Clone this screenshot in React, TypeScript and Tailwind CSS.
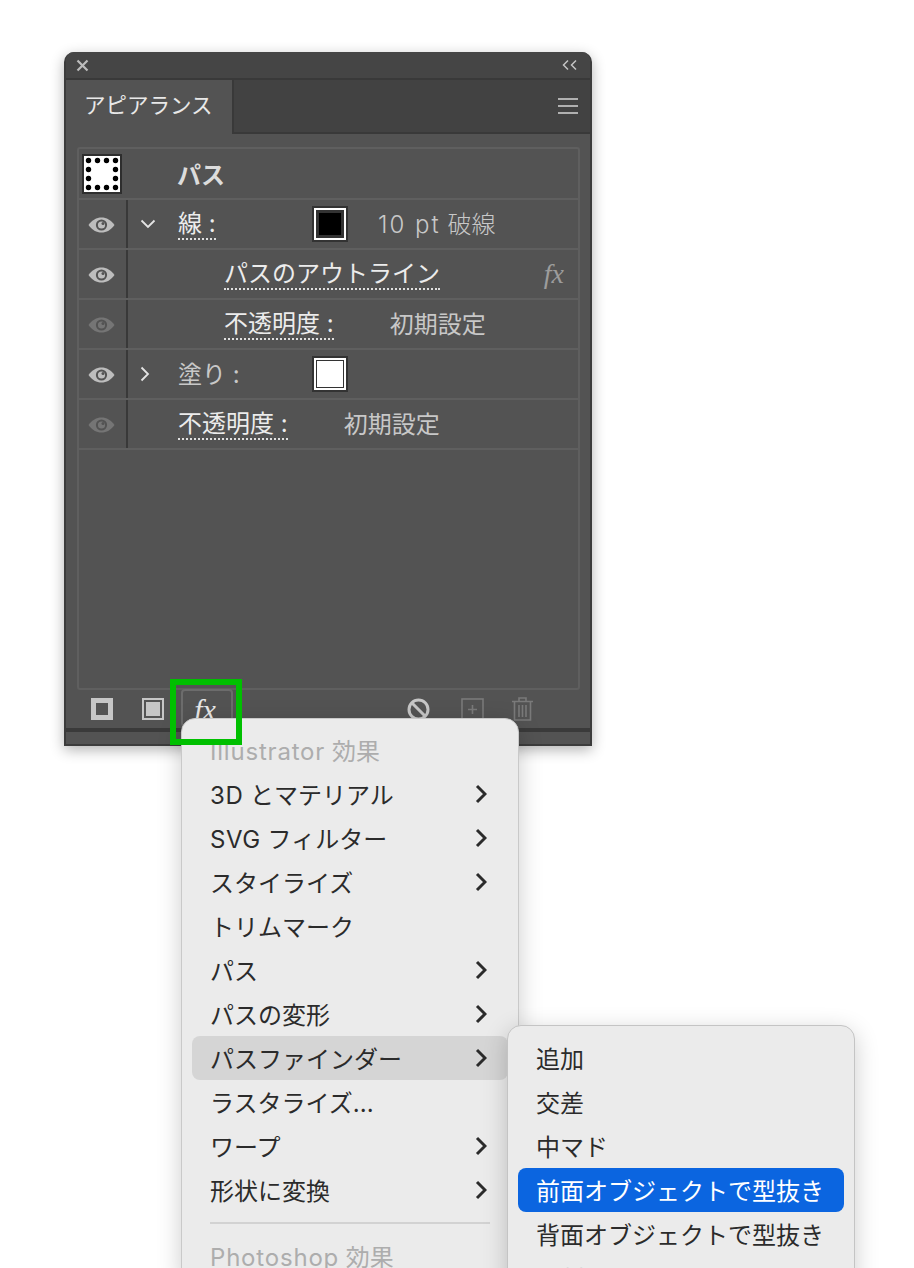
import React from "react";

const font = "font-['Inter','Noto_Sans_CJK_JP',sans-serif]";

function Eye({ dim = false }: { dim?: boolean }) {
	const c = dim ? "#757575" : "#bdbdbd";
	return (
		<svg width="27" height="16" viewBox="0 0 27 16">
			<path d="M0.5 8C4 3 8.5 0.5 13.5 0.5S23 3 26.5 8C23 13 18.5 15.5 13.5 15.5S4 13 0.5 8Z" fill={c} />
			<circle cx="13.5" cy="8" r="5.6" fill="#535353" />
			<circle cx="13.5" cy="8" r="3.6" fill={c} />
			<circle cx="15" cy="6.4" r="1.5" fill="#535353" />
		</svg>
	);
}

function Swatch({ black = false }: { black?: boolean }) {
	return (
		<div className="w-[36px] h-[36px] bg-[#333333] p-[2px] shrink-0">
			<div className={`w-full h-full border-2 border-white bg-[#333333] ${black ? "p-[3px]" : "p-[1px]"}`}>
				<div className={black ? "w-full h-full bg-black" : "w-full h-full bg-white"} />
			</div>
		</div>
	);
}

function Row({ eye = "on", children }: { eye?: "on" | "dim"; children?: React.ReactNode }) {
	return (
		<div className="flex h-[50px] border-b-2 border-[#5f5f5f] items-center">
			<div className="w-[47px] flex justify-center pr-[2px] mt-[2px]">
				<Eye dim={eye === "dim"} />
			</div>
			<div className="w-[2px] h-[48px] bg-[#393939]" />
			{children}
		</div>
	);
}

function Label({ children }: { children: React.ReactNode }) {
	return (
		<span className="pt-[2px] text-[24px] leading-[28px] text-[#ececec] border-b-2 border-dotted border-[#e0e0e0] whitespace-nowrap">
			{children}
		</span>
	);
}

function Chevron({ color = "#2b2b2b", w = 3 }: { color?: string; w?: number }) {
	return (
		<svg width="12" height="20" viewBox="0 0 12 20" fill="none">
			<path d="M2 2L10 10L2 18" stroke={color} strokeWidth={w} />
		</svg>
	);
}

function Item({ label, arrow = false, active = false }: { label: React.ReactNode; arrow?: boolean; active?: boolean }) {
	return (
		<div className={`flex h-[44px] items-center justify-between pl-[18px] pr-[21px] rounded-[8px] text-[24px] text-[#2b2b2b] whitespace-nowrap ${active ? "bg-[#d5d5d5]" : ""}`}>
			<span className="mt-[3px]">{label}</span>
			{arrow && <Chevron />}
		</div>
	);
}

function SubItem({ label, active = false, dim = false }: { label: string; active?: boolean; dim?: boolean }) {
	const tone = active ? "bg-[#0b65e0] text-white" : dim ? "text-[#adadad]" : "text-[#2b2b2b]";
	return <div className={`flex h-[44px] items-center pl-[18px] pt-[3px] rounded-[8px] text-[24px] whitespace-nowrap ${tone}`}>{label}</div>;
}

export default function App() {
	return (
		<div lang="ja" className={`relative w-[914px] h-[1268px] overflow-hidden bg-white pt-[52px] pl-[64px] ${font}`}>
			{/* panel */}
			<div className="w-[528px] h-[694px] flex flex-col bg-[#535353] border-2 border-t-0 border-[#3c3c3c] rounded-t-[10px] shadow-[0_4px_14px_rgba(0,0,0,0.3)] overflow-hidden">
				<div className="h-[28px] shrink-0 flex items-center justify-between pl-[10px] pr-[12px] bg-[#454545] border-b-2 border-[#393939]">
					<svg width="13" height="13" viewBox="0 0 13 13" fill="none">
						<path d="M1.5 1.5L11.5 11.5M11.5 1.5L1.5 11.5" stroke="#bcbcbc" strokeWidth="2.2" />
					</svg>
					<svg width="16" height="12" viewBox="0 0 16 12" fill="none">
						<path d="M6 1.5L1.5 6L6 10.5M14 1.5L9.5 6L14 10.5" stroke="#c4c4c4" strokeWidth="1.5" />
					</svg>
				</div>
				<div className="h-[54px] shrink-0 flex">
					<div className="w-[168px] pl-[18px] pt-[10px] text-[21.5px] leading-[30px] text-[#e8e8e8] whitespace-nowrap bg-[#535353] border-r-2 border-[#393939]">
						アピアランス
					</div>
					<div className="flex-1 bg-[#424242] border-b-2 border-[#393939] flex items-center justify-end pr-[12px]">
						<div className="flex flex-col gap-[5px]">
							<div className="w-[20px] h-[2px] bg-[#b0b0b0]" />
							<div className="w-[20px] h-[2px] bg-[#b0b0b0]" />
							<div className="w-[20px] h-[2px] bg-[#b0b0b0]" />
						</div>
					</div>
				</div>
				{/* list */}
				<div className="h-[543px] mt-[13px] ml-[11px] mr-[10px] shrink-0 border-2 border-[#5f5f5f] rounded-[3px]">
					<div className="flex h-[51px] border-b-2 border-[#5f5f5f] items-center">
						<svg className="ml-[3px]" width="40" height="40" viewBox="0 0 40 40">
							<rect width="40" height="40" fill="#2e2e2e" />
							<rect x="2" y="2" width="36" height="36" fill="#ffffff" />
							{[6.5, 15.5, 24.5, 33.5].map((y) =>
								[6.5, 15.5, 24.5, 33.5].map((x) =>
									x === 6.5 || x === 33.5 || y === 6.5 || y === 33.5 ? <circle key={`${x}-${y}`} cx={x} cy={y} r="2.7" fill="#000" /> : null,
								),
							)}
						</svg>
						<span className="ml-[55px] mt-[4px] text-[24px] font-bold text-[#dcdcdc]">パス</span>
					</div>
					<Row>
						<div className="w-[50px] pl-[12px]">
							<svg width="16" height="10" viewBox="0 0 16 10" fill="none">
								<path d="M1.5 1.5L8 8L14.5 1.5" stroke="#e4e4e4" strokeWidth="1.8" />
							</svg>
						</div>
						<div className="w-[134px]">
							<Label>線 :</Label>
						</div>
						<Swatch black />
						<span className="ml-[30px] mt-[2px] text-[24px] font-light text-[#c8c8c8] whitespace-nowrap">
							<span className="tracking-[2px]">10 pt</span> 破線
						</span>
					</Row>
					<Row>
						<div className="w-[96px]" />
						<Label>パスのアウトライン</Label>
						<span className="ml-auto mr-[14px] font-['Liberation_Serif',serif] italic text-[28px] text-[#9c9c9c]">fx</span>
					</Row>
					<Row eye="dim">
						<div className="w-[96px]" />
						<Label>不透明度 :</Label>
						<span className="ml-[56px] mt-[2px] text-[24px] text-[#c8c8c8] whitespace-nowrap">初期設定</span>
					</Row>
					<Row>
						<div className="w-[50px] pl-[12px]">
							<svg width="10" height="16" viewBox="0 0 10 16" fill="none">
								<path d="M1.5 1.5L8 8L1.5 14.5" stroke="#e4e4e4" strokeWidth="1.8" />
							</svg>
						</div>
						<div className="w-[134px] mt-[2px] text-[24px] text-[#c8c8c8]">塗り :</div>
						<Swatch />
					</Row>
					<Row eye="dim">
						<div className="w-[50px]" />
						<Label>不透明度 :</Label>
						<span className="ml-[56px] mt-[2px] text-[24px] text-[#c8c8c8] whitespace-nowrap">初期設定</span>
					</Row>
				</div>
				{/* toolbar */}
				<div className="h-[38px] shrink-0 flex items-center pl-[25px]">
					<div className="w-[22px] h-[22px] border-[5px] border-[#c6c6c6]" />
					<div className="ml-[29px] w-[22px] h-[22px] border-2 border-[#c6c6c6] p-[2px]">
						<div className="w-full h-full bg-[#c6c6c6]" />
					</div>
					<div className="relative ml-[17px] w-[52px] h-[38px] mt-[-2px] pr-[4px] border-2 border-[#6c6c6c] rounded-[4px] font-['Liberation_Serif',serif] italic text-[30px] leading-[38px] text-[#e8e8e8] text-center">
						fx
						<div className="absolute left-[34px] top-[27px] border-x-[3px] border-t-[3px] border-x-transparent border-t-[#e8e8e8]" />
					</div>
					<svg className="ml-[174px]" width="23" height="23" viewBox="0 0 23 23" fill="none">
						<circle cx="11.5" cy="11.5" r="9.5" stroke="#c6c6c6" strokeWidth="3" />
						<path d="M5 5L18 18" stroke="#c6c6c6" strokeWidth="3" />
					</svg>
					<svg className="ml-[31px]" width="23" height="23" viewBox="0 0 23 23" fill="none">
						<rect x="1" y="1" width="21" height="21" stroke="#7a7a7a" strokeWidth="1.6" />
						<path d="M11.5 7V16M7 11.5H16" stroke="#7a7a7a" strokeWidth="1.6" />
					</svg>
					<svg className="ml-[27px]" width="23" height="24" viewBox="0 0 23 24" fill="none">
						<path d="M1 4.5H22M8 4V1H15V4M3.5 5V23H19.5V5M8 8V20M11.5 8V20M15 8V20" stroke="#7a7a7a" strokeWidth="1.6" />
					</svg>
				</div>
				<div className="h-[4px] shrink-0 bg-[#3a3a3a]" />
			</div>

			{/* effect menu */}
			<div className="absolute left-[181px] top-[718px] w-[338px] h-[560px] px-[10px] pt-[9px] bg-[#ebebeb] border border-[#c9c9c9] rounded-t-[14px] shadow-[0_6px_24px_rgba(0,0,0,0.2)]">
				<div className="h-[44px] flex items-center pl-[18px] pt-[3px] text-[24px] text-[#adadad] whitespace-nowrap">
					<span className="tracking-[0.8px]">Illustrator</span>&nbsp;効果
				</div>
				<Item label={<><span className="tracking-[0.6px]">3D</span> とマテリアル</>} arrow />
				<Item label={<><span className="tracking-[0.6px]">SVG</span> フィルター</>} arrow />
				<Item label="スタイライズ" arrow />
				<Item label="トリムマーク" />
				<Item label="パス" arrow />
				<Item label="パスの変形" arrow />
				<Item label="パスファインダー" arrow active />
				<Item label="ラスタライズ..." />
				<Item label="ワープ" arrow />
				<Item label="形状に変換" arrow />
				<div className="mx-[18px] mt-[10px] mb-[12px] h-[2px] bg-[#d2d2d2]" />
				<div className="h-[44px] flex items-center pl-[18px] text-[24px] text-[#adadad] whitespace-nowrap">
					<span className="tracking-[0.8px]">Photoshop</span>&nbsp;効果
				</div>
			</div>

			{/* pathfinder submenu */}
			<div className="absolute left-[507px] top-[1025px] w-[348px] h-[280px] px-[10px] pt-[10px] bg-[#ebebeb] border border-[#c4c4c4] rounded-t-[14px] shadow-[0_6px_24px_rgba(0,0,0,0.2)]">
				<SubItem label="追加" />
				<SubItem label="交差" />
				<SubItem label="中マド" />
				<SubItem label="前面オブジェクトで型抜き" active />
				<SubItem label="背面オブジェクトで型抜き" />
				<SubItem label="分割" dim />
			</div>

			{/* green highlight */}
			<div className="absolute left-[170px] top-[679px] w-[72px] h-[66px] border-[6px] border-[#00c000]" />
		</div>
	);
}
